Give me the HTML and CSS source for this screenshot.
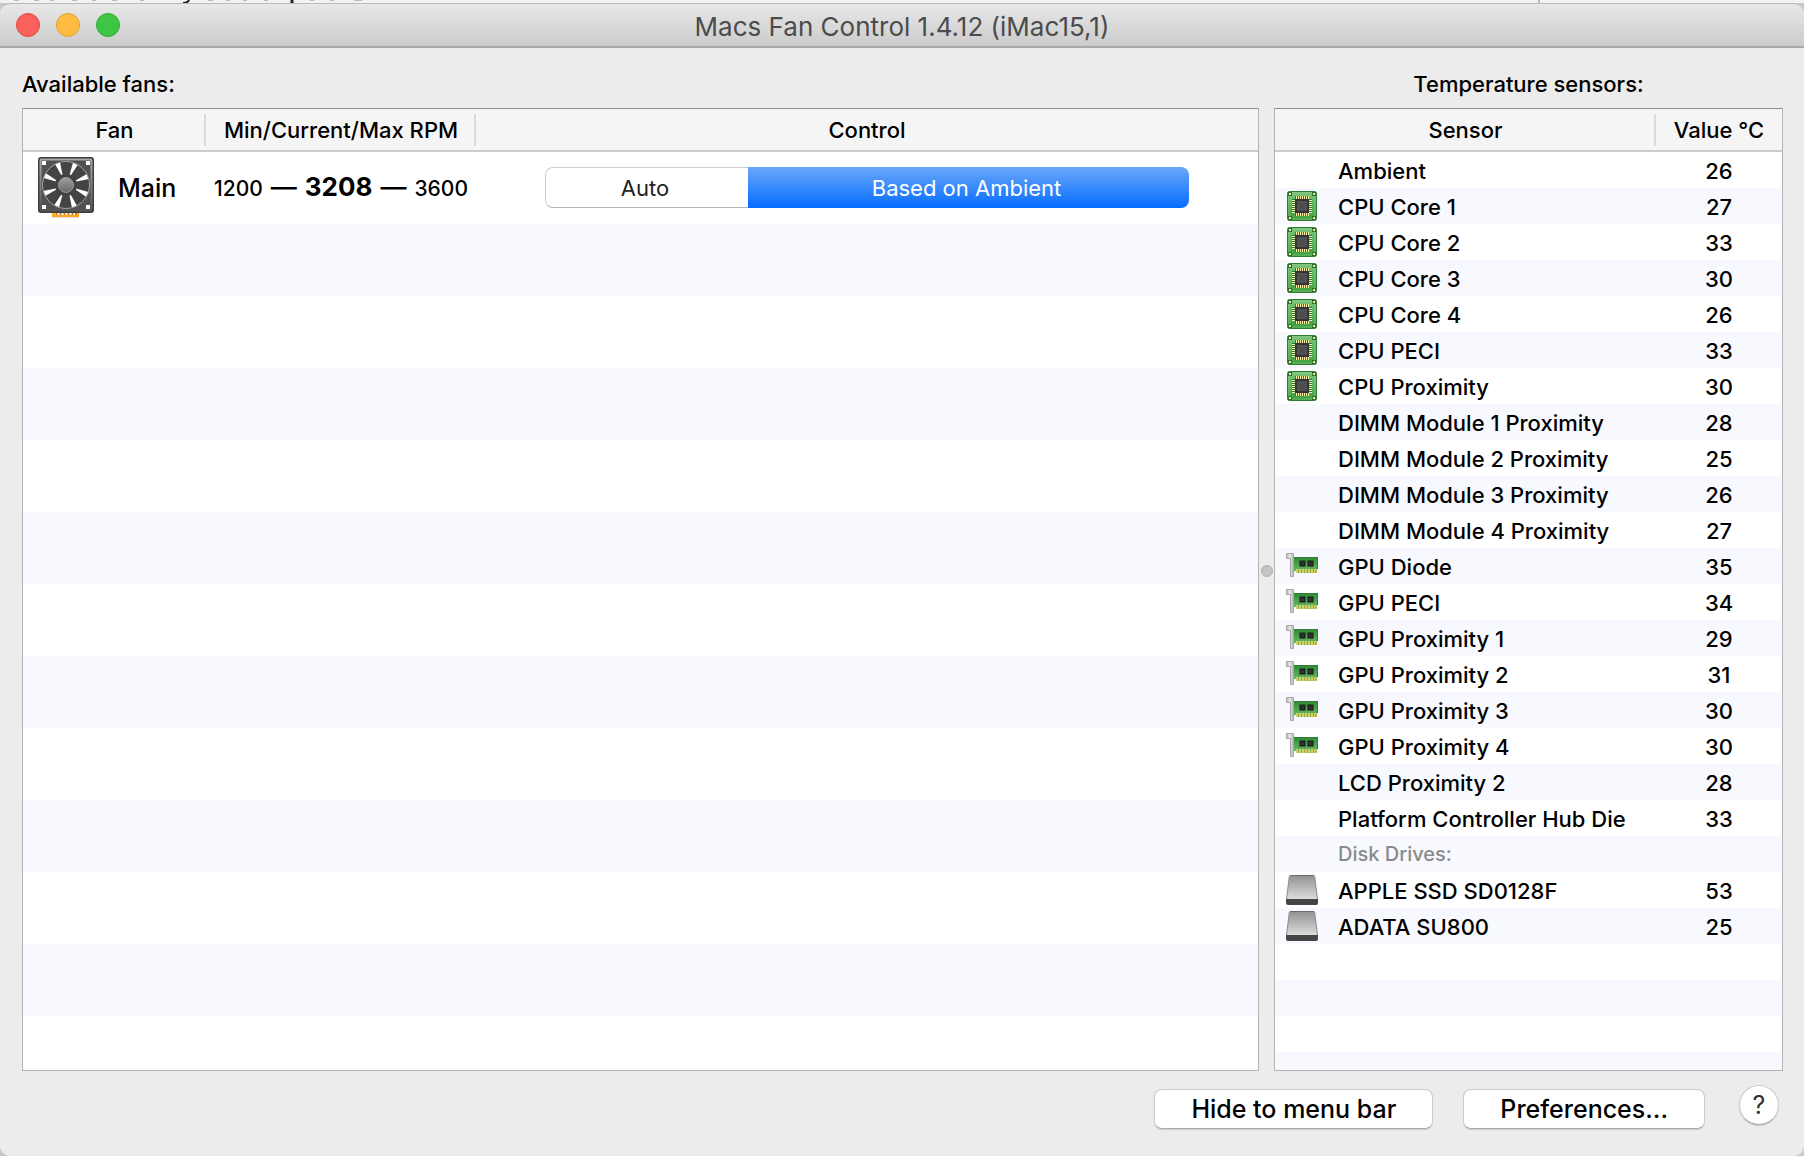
FILE: index.html
```html
<!DOCTYPE html>
<html lang="en">

<head>
  <meta charset="UTF-8"/>
  <title>Macs Fan Control</title>
  <link rel="stylesheet" href="styles.css">
</head>

<body>
  <!-- shared icons -->
  <svg class="defs" width="0" height="0" aria-hidden="true">
    <defs>
      <linearGradient id="pcb" x1="0" y1="0" x2="0" y2="1">
        <stop offset="0" stop-color="#7cc47c"/>
        <stop offset="1" stop-color="#3f9f3f"/>
      </linearGradient>
      <linearGradient id="card" x1="0" y1="0" x2="0" y2="1">
        <stop offset="0" stop-color="#2f8a35"/>
        <stop offset="1" stop-color="#63b963"/>
      </linearGradient>
      <linearGradient id="bracket" x1="0" y1="0" x2="1" y2="0">
        <stop offset="0" stop-color="#b8b8b8"/>
        <stop offset=".5" stop-color="#e8e8e8"/>
        <stop offset="1" stop-color="#b0b0b0"/>
      </linearGradient>
      <linearGradient id="metal" x1="0" y1="0" x2="0" y2="1">
        <stop offset="0" stop-color="#929292"/>
        <stop offset="1" stop-color="#dedede"/>
      </linearGradient>
      <linearGradient id="hub" x1="0" y1="0" x2="0" y2="1">
        <stop offset="0" stop-color="#a0a0a0"/>
        <stop offset="1" stop-color="#696969"/>
      </linearGradient>
      <linearGradient id="rim" x1="0" y1="0" x2="0" y2="1">
        <stop offset="0" stop-color="#a9a9a9"/>
        <stop offset="1" stop-color="#555"/>
      </linearGradient>
    </defs>

    <symbol id="icon-cpu" viewBox="0 0 32 30">
      <rect x="1.5" y=".5" width="29" height="29" rx="2" fill="url(#pcb)" stroke="#2f7d32"/>
      <rect x="3" y="2" width="26" height="26" fill="none" stroke="#8dd08b" opacity=".5"/>
      <g fill="#f7e9a0" stroke="#2b6f2e">
        <rect x="2.5" y="1.5" width="3" height="3"/>
        <rect x="26.5" y="1.5" width="3" height="3"/>
        <rect x="2.5" y="25.5" width="3" height="3"/>
        <rect x="26.5" y="25.5" width="3" height="3"/>
      </g>
      <path d="M9 5H23V8H26V22H23V25H9V22H6V8H9Z" fill="#2f7a33"/>
      <path d="M10 6.500H23M10 23.500H23" stroke="#fbf0a8" stroke-width="3" stroke-dasharray="1 1"/>
      <path d="M7.500 9V22M24.500 9V22" stroke="#fbf0a8" stroke-width="3" stroke-dasharray="1 1"/>
      <rect x="9" y="8" width="14" height="14" fill="#343434"/>
      <rect x="11" y="10" width="10" height="10" fill="#515151"/>
      <path d="M12 12l7 7M19 12l-6 6" stroke="#444"/>
    </symbol>

    <symbol id="icon-gpu" viewBox="0 0 32 30">
      <path d="M.5 2.500H7.500V25.500H4.500V7.500H.5Z" fill="url(#bracket)" stroke="#a6a6a6"/>
      <rect x="10" y="17" width="21" height="5" fill="#d8cf62"/>
      <path d="M12.500 18V22M15.500 18V22M18.500 18V22M21.500 18V22M24.500 18V22M27.500 18V22M30 18V22" stroke="#7fae58"/>
      <path d="M8 6H32V18H10V20H8Z" fill="url(#card)"/>
      <path d="M8 6.500H31.500V18" fill="none" stroke="#2f7a34"/>
      <rect x="14" y="10" width="5" height="5" fill="#303030" stroke="#181818"/>
      <rect x="22" y="10" width="5" height="5" fill="#303030" stroke="#181818"/>
    </symbol>

    <symbol id="icon-disk" viewBox="0 0 32 30">
      <path d="M4.500 .5H27.500Q28.500 .5 28.700 1.500L31.500 24.500H.5L3.300 1.500Q3.500 .5 4.500 .5Z" fill="url(#metal)" stroke="#8a8a8a"/>
      <path d="M4 .5H28" stroke="#6c6c6c"/>
      <path d="M0 24H32V28Q32 30 30 30H2Q0 30 0 28Z" fill="#454545"/>
    </symbol>

    <symbol id="icon-fan" viewBox="0 0 56 62">
      <path d="M14 56H17V58H39V56H41V60H14Z" fill="#fca726"/>
      <path d="M18.500 56V58M22.500 56V58M26.500 56V58M30.500 56V58M34.500 56V58M38 56V58" stroke="#c98224" stroke-width="2"/>
      <path d="M14 60.500H41" stroke="#ddd"/>
      <rect x="0" y="0" width="56" height="56" rx="3" fill="#3e3e40"/>
      <rect x="2.500" y="2.500" width="51" height="51" rx="1" fill="#515153" stroke="url(#rim)" stroke-width="2"/>
      <path d="M4 4h4v4h-4zM48 4h4v4h-4zM4 48h4v4h-4zM48 48h4v4h-4z" fill="#fff"/>
      <circle cx="28" cy="28" r="23.500" fill="#fff"/>
      <g fill="#444">
        <path id="blade" d="M25 20L22 5Q28 4 35 5.500L31 20Z"/>
        <use href="#blade" transform="rotate(45 28 28)"/>
        <use href="#blade" transform="rotate(90 28 28)"/>
        <use href="#blade" transform="rotate(135 28 28)"/>
        <use href="#blade" transform="rotate(180 28 28)"/>
        <use href="#blade" transform="rotate(225 28 28)"/>
        <use href="#blade" transform="rotate(270 28 28)"/>
        <use href="#blade" transform="rotate(315 28 28)"/>
      </g>
      <circle cx="28" cy="28" r="23.500" fill="none" stroke="#9a9a9a"/>
      <circle cx="28" cy="28" r="11" fill="#424242"/>
      <circle cx="28" cy="28" r="7.500" fill="url(#hub)" stroke="#999"/>
    </symbol>
  </svg>

  <!-- sliver of the window behind -->
  <div class="behind">
    <svg width="400" height="3" aria-hidden="true">
      <path d="M189 0Q188 3 183 3" fill="none" stroke="#222" stroke-width="2"/>
      <path d="M292 0V3" stroke="#222" stroke-width="3"/>
      <path d="M14 .5H19M34 .5H39M50 .5H54M72 .5H77M92 .5H96M112 .5H117M140 .5H144M208 .5H213M226 .5H230M243 .5H247M264 .5H268M310 .5H314M330 .5H334M354 .5H362" stroke="#bbb"/>
    </svg>
    <span class="behind-line"></span>
  </div>

  <div class="window">
    <header class="titlebar">
      <div class="lights">
        <button class="light close" aria-label="Close"></button>
        <button class="light minimize" aria-label="Minimize"></button>
        <button class="light zoom" aria-label="Zoom"></button>
      </div>
      <h1>Macs Fan Control 1.4.12 (iMac15,1)</h1>
    </header>

    <main class="panes">
      <section class="pane fans">
        <h2 id="fans_label">Available fans:</h2>
        <div class="list tall">
          <table aria-labelledby="fans_label">
            <thead>
              <tr><th class="col-fan">Fan</th><th class="col-rpm">Min/Current/Max RPM</th><th>Control</th></tr>
            </thead>
            <tbody>
              <tr>
                <td><div class="fan"><svg class="fan-icon"><use href="#icon-fan"/></svg>Main</div></td>
                <td><div class="rpm"><span>1200</span><i>—</i><b>3208</b><i>—</i><span>3600</span></div></td>
                <td>
                  <div class="segmented">
                    <button>Auto</button>
                    <button class="on" aria-pressed="true">Based on Ambient</button>
                  </div>
                </td>
              </tr>
            </tbody>
          </table>
        </div>
      </section>

      <div class="splitter"><span></span></div>

      <section class="pane sensors">
        <h2 id="sensors_label">Temperature sensors:</h2>
        <div class="list short">
          <table aria-labelledby="sensors_label">
            <thead>
              <tr><th>Sensor</th><th class="col-value">Value °C</th></tr>
            </thead>
            <tbody>
              <tr><td><div class="sensor"><svg></svg><span>Ambient</span></div></td><td>26</td></tr>
              <tr><td><div class="sensor"><svg><use href="#icon-cpu"/></svg><span>CPU Core 1</span></div></td><td>27</td></tr>
              <tr><td><div class="sensor"><svg><use href="#icon-cpu"/></svg><span>CPU Core 2</span></div></td><td>33</td></tr>
              <tr><td><div class="sensor"><svg><use href="#icon-cpu"/></svg><span>CPU Core 3</span></div></td><td>30</td></tr>
              <tr><td><div class="sensor"><svg><use href="#icon-cpu"/></svg><span>CPU Core 4</span></div></td><td>26</td></tr>
              <tr><td><div class="sensor"><svg><use href="#icon-cpu"/></svg><span>CPU PECI</span></div></td><td>33</td></tr>
              <tr><td><div class="sensor"><svg><use href="#icon-cpu"/></svg><span>CPU Proximity</span></div></td><td>30</td></tr>
              <tr><td><div class="sensor"><svg></svg><span>DIMM Module 1 Proximity</span></div></td><td>28</td></tr>
              <tr><td><div class="sensor"><svg></svg><span>DIMM Module 2 Proximity</span></div></td><td>25</td></tr>
              <tr><td><div class="sensor"><svg></svg><span>DIMM Module 3 Proximity</span></div></td><td>26</td></tr>
              <tr><td><div class="sensor"><svg></svg><span>DIMM Module 4 Proximity</span></div></td><td>27</td></tr>
              <tr><td><div class="sensor"><svg><use href="#icon-gpu"/></svg><span>GPU Diode</span></div></td><td>35</td></tr>
              <tr><td><div class="sensor"><svg><use href="#icon-gpu"/></svg><span>GPU PECI</span></div></td><td>34</td></tr>
              <tr><td><div class="sensor"><svg><use href="#icon-gpu"/></svg><span>GPU Proximity 1</span></div></td><td>29</td></tr>
              <tr><td><div class="sensor"><svg><use href="#icon-gpu"/></svg><span>GPU Proximity 2</span></div></td><td>31</td></tr>
              <tr><td><div class="sensor"><svg><use href="#icon-gpu"/></svg><span>GPU Proximity 3</span></div></td><td>30</td></tr>
              <tr><td><div class="sensor"><svg><use href="#icon-gpu"/></svg><span>GPU Proximity 4</span></div></td><td>30</td></tr>
              <tr><td><div class="sensor"><svg></svg><span>LCD Proximity 2</span></div></td><td>28</td></tr>
              <tr><td><div class="sensor"><svg></svg><span>Platform Controller Hub Die</span></div></td><td>33</td></tr>
              <tr class="group"><td><div class="sensor"><svg></svg><span>Disk Drives:</span></div></td><td></td></tr>
              <tr><td><div class="sensor"><svg><use href="#icon-disk"/></svg><span>APPLE SSD SD0128F</span></div></td><td>53</td></tr>
              <tr><td><div class="sensor"><svg><use href="#icon-disk"/></svg><span>ADATA SU800</span></div></td><td>25</td></tr>
            </tbody>
          </table>
        </div>
      </section>
    </main>

    <footer class="actions">
      <button class="push">Hide to menu bar</button>
      <button class="push">Preferences...</button>
      <button class="help">?</button>
    </footer>
  </div>
</body>

</html>
```

FILE: styles.css
```css
* {
  box-sizing: border-box;
}
html, body {
  height: 100%;
  margin: 0;
}
body {
  display: flex;
  flex-direction: column;
  background-color: #c8c8c8;
  color: #000;
  font: 22px/28px Inter, "Liberation Sans", sans-serif;
  overflow: hidden;
}
button {
  margin: 0;
  padding: 0;
  border: 0;
  font: inherit;
  color: inherit;
}
.defs {
  position: absolute;
}

.behind {
  display: flex;
  flex: none;
  justify-content: space-between;
  height: 3px;
  padding-right: 264px;
  background-color: #f2f2f2;
}
.behind-line {
  width: 2px;
  background-color: #bbb;
}

.window {
  display: flex;
  flex: 1;
  flex-direction: column;
  min-height: 0;
  border-radius: 10px;
  background-color: #ececec;
}

/* title bar */
.titlebar {
  display: grid;
  grid-template-columns: 1fr auto 1fr;
  align-items: center;
  height: 45px;
  padding: 0 16px;
  border-top: 1px solid #bababa;
  border-bottom: 2px solid #a9a9a9;
  border-radius: 10px 10px 0 0;
  background: linear-gradient(#e8e8e8, #cbcbcb);
}
.titlebar h1 {
  margin: 0;
  padding-top: 3px;
  color: #4c4c4c;
  font-size: 26px;
  font-weight: 400;
}
.lights {
  display: flex;
  gap: 16px;
}
.light {
  width: 24px;
  height: 24px;
  border: 1px solid;
  border-radius: 50%;
}
.close {
  background-color: #fc605c;
  border-color: #e2463f;
}
.minimize {
  background-color: #fdbc40;
  border-color: #dfa032;
}
.zoom {
  background-color: #3ec544;
  border-color: #2cac30;
}

/* the two lists */
.panes {
  display: flex;
  flex: 1;
  min-height: 0;
  padding: 0 21px 0 22px;
}
.pane {
  display: flex;
  flex-direction: column;
}
.fans {
  flex: 1;
}
.sensors {
  width: 509px;
}
.pane h2 {
  margin: 0;
  padding: 22px 0 10px;
  font-size: 22px;
  font-weight: 500;
}
.sensors h2 {
  text-align: center;
}
.splitter {
  display: flex;
  align-items: center;
  justify-content: center;
  width: 15px;
}
.splitter span {
  width: 12px;
  height: 12px;
  margin-top: 22px;
  border: 1px solid #b0b0b0;
  border-radius: 50%;
  background-color: #c4c4c4;
}

.list {
  --row: 36px;
  flex: 1;
  min-height: 0;
  overflow: hidden;
  border: 1px solid #b4b4b4;
  border-top-color: #8e8e8e;
  /* stripes go on below the last row */
  background: repeating-linear-gradient(#fff 0 var(--row), #f7f9ff var(--row) calc(var(--row) * 2)) 0 43px;
}
.list.tall {
  --row: 72px;
}
.list table {
  width: 100%;
  table-layout: fixed;
  border-spacing: 0;
}
.list th {
  height: 43px;
  padding: 0;
  border-bottom: 2px solid #cdcdcd;
  background-color: #f5f5f5;
  font-weight: 500;
}
.list th:not(:last-child) {
  background: linear-gradient(#dadada, #dadada) right center / 2px 32px no-repeat #f5f5f5;
}
.list td {
  height: var(--row);
  padding: 0;
  font-weight: 500;
  text-align: center;
}
.list.short td:last-child {
  padding-top: 2px;
}
.col-fan {
  width: 183px;
}
.col-rpm {
  width: 270px;
}
.col-value {
  width: 126px;
}

.fan {
  display: flex;
  align-items: center;
  gap: 24px;
  padding-left: 15px;
  font-size: 25px;
}
.fan-icon {
  width: 56px;
  height: 62px;
}
.rpm {
  display: flex;
  align-items: baseline;
  justify-content: center;
  gap: 8px;
  font-size: 21px;
}
.rpm b, .rpm i {
  font-size: 26px;
  font-style: normal;
}
.segmented {
  display: flex;
  width: 644px;
  height: 41px;
  margin: 0 auto 2px;
  border-radius: 8px;
  font-weight: 400;
}
.segmented button {
  width: 203px;
  padding: 2px 4px 0 0;
  border: 1px solid #cfcfcf;
  border-right: 0;
  border-bottom-color: #b5b5b5;
  border-radius: 8px 0 0 8px;
  background-color: #fff;
  color: #222;
}
.segmented .on {
  flex: 1;
  border: 0;
  border-radius: 0 8px 8px 0;
  background: linear-gradient(#6aa7f8, #056dff);
  color: #fff;
}

.sensor {
  display: flex;
  align-items: center;
  gap: 20px;
  padding-left: 11px;
}
.sensor svg {
  width: 32px;
  height: 30px;
}
.sensor span {
  padding-top: 2px;
}
.group .sensor {
  color: #8a8a8a;
  font-size: 20px;
}
.group .sensor span {
  padding-top: 0;
}

/* bottom buttons */
.actions {
  display: flex;
  align-items: flex-start;
  justify-content: flex-end;
  gap: 30px;
  height: 85px;
  padding: 14px 25px 0 0;
}
.push, .help {
  border: 1px solid #cbcbcb;
  border-bottom-color: #ababab;
  background-color: #fff;
  box-shadow: 0 1px 1px #0002;
}
.push {
  height: 40px;
  margin-top: 4px;
  padding: 0 36px;
  border-radius: 8px;
  font-size: 25px;
  font-weight: 500;
}
.help {
  width: 40px;
  height: 40px;
  margin-left: 4px;
  border-radius: 50%;
  color: #333;
  font-size: 25px;
}
```
